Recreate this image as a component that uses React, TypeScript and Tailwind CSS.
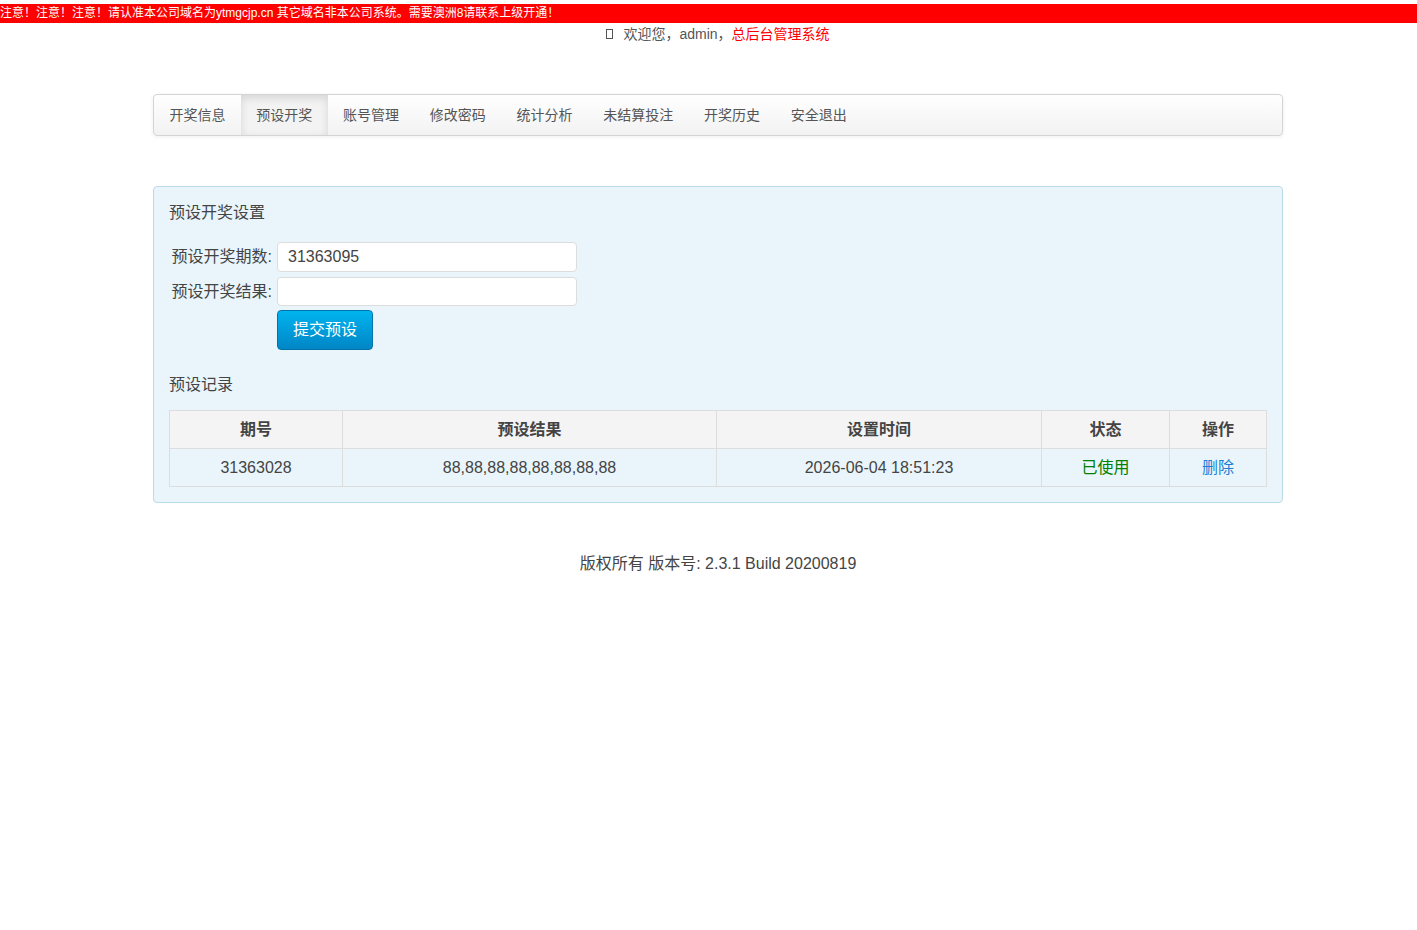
const font = { fontFamily: '"Liberation Sans", Arial, "Noto Sans CJK SC", sans-serif' };

const navItems = ["开奖信息", "预设开奖", "账号管理", "修改密码", "统计分析", "未结算投注", "开奖历史", "安全退出"];

const records = [
  { issue: "31363028", result: "88,88,88,88,88,88,88,88", time: "2026-06-04 18:51:23", status: "已使用" },
];

export default function App() {
  return (
    <div className="min-h-screen bg-white text-[#333]" style={font}>
      <div className="pt-1">
        <div className="h-[19px] bg-[#ff0000] text-[12px] leading-[19px] text-white whitespace-nowrap">
          注意！注意！注意！请认准本公司域名为ytmgcjp.cn 其它域名非本公司系统。需要澳洲8请联系上级开通！
        </div>
      </div>

      <div className="pl-[19px]">
        <div className="mt-[1px] flex h-[20px] items-center justify-center text-[14px] text-[#555]">
          <span className="mr-[10px] inline-block h-[10px] w-[7px] border border-[#555]" />
          <span>欢迎您，admin，</span>
          <span className="text-[#ff0000]">总后台管理系统</span>
        </div>

        <div className="mx-auto mt-[50px] w-[1130px]">
          {/* top menu */}
          <div className="flex h-[42px] rounded-[4px] border border-[#d4d4d4] bg-gradient-to-b from-white to-[#f2f2f2] shadow-[0_1px_4px_rgba(0,0,0,0.065)]">
            {navItems.map((item, i) => (
              <a
                key={item}
                className={
                  "flex h-full items-center px-[15.4px] text-[14px] text-[#555] " +
                  (i === 1 ? "bg-[#f3f3f3] shadow-[inset_0_3px_8px_rgba(0,0,0,0.125)]" : "") +
                  (i === 0 ? " rounded-l-[4px]" : "")
                }
              >
                {item}
              </a>
            ))}
          </div>

          {/* preset panel */}
          <div className="mt-[50px] rounded-[4px] border border-[#bcdbe8] bg-[#eaf5fb] px-[15px] pb-[15px] pt-[16px]">
            <div className="h-[20px] text-[16px] leading-[20px] text-[#444]">预设开奖设置</div>

            <div className="mt-[19px] flex flex-col gap-[5px]">
              <div className="flex items-center">
                <label className="w-[104px] pr-[1px] text-right text-[16px] text-[#444]">预设开奖期数:</label>
                <input
                  className="ml-[4px] h-[30px] w-[300px] rounded-[4px] border border-[#ddd] bg-white px-[10px] text-[16px] text-[#444] outline-none"
                  defaultValue="31363095"
                  style={font}
                />
              </div>
              <div className="flex items-center">
                <label className="w-[104px] pr-[1px] text-right text-[16px] text-[#444]">预设开奖结果:</label>
                <input
                  className="ml-[4px] h-[29px] w-[300px] rounded-[4px] border border-[#ddd] bg-white px-[10px] text-[16px] outline-none"
                  style={font}
                />
              </div>
              <div className="-mt-[1px] pl-[108px]">
                <button
                  className="h-[40px] w-[96px] rounded-[4px] border border-[#0074aa] bg-gradient-to-b from-[#00b4ef] to-[#0086c6] text-[16px] text-white"
                  style={font}
                >
                  提交预设
                </button>
              </div>
            </div>

            <div className="mt-[25px] h-[20px] text-[16px] leading-[20px] text-[#444]">预设记录</div>

            <table className="mt-[15px] w-full border-collapse text-center text-[16px] text-[#444]">
              <thead>
                <tr className="h-[38px] bg-[#f4f4f4]">
                  <th className="w-[173px] border border-[#ddd] font-bold">期号</th>
                  <th className="w-[374px] border border-[#ddd] font-bold">预设结果</th>
                  <th className="w-[325px] border border-[#ddd] font-bold">设置时间</th>
                  <th className="w-[128px] border border-[#ddd] font-bold">状态</th>
                  <th className="border border-[#ddd] font-bold">操作</th>
                </tr>
              </thead>
              <tbody>
                {records.map((r) => (
                  <tr key={r.issue} className="h-[38px]">
                    <td className="border border-[#ddd]">{r.issue}</td>
                    <td className="border border-[#ddd]">{r.result}</td>
                    <td className="border border-[#ddd]">{r.time}</td>
                    <td className="border border-[#ddd] text-[#008000]">{r.status}</td>
                    <td className="border border-[#ddd] text-[#1c7fd6]">删除</td>
                  </tr>
                ))}
              </tbody>
            </table>
          </div>

          <div className="mt-[51px] text-center text-[16px] leading-[20px] text-[#444]">
            版权所有 版本号: 2.3.1 Build 20200819
          </div>
        </div>
      </div>
    </div>
  );
}
